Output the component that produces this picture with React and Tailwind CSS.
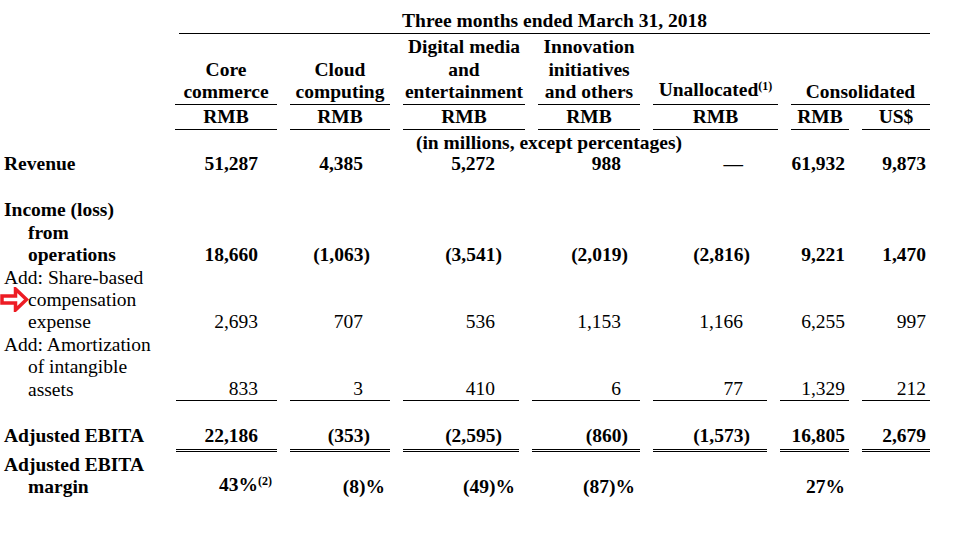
import React from "react";

const HEAD = "grid grid-cols-[162px_102px_100px_122px_102px_125px_58px_68px] gap-x-[13px]";
const BODY = "grid grid-cols-[163px_101px_100px_116px_108px_114px_69px_68px] gap-x-[13px]";
const PAD = ["pr-[19px]", "pr-[27px]", "pr-[24px]", "pr-[19px]", "pr-[24px]", "pr-[4px]", "pr-[4px]"];

// closing paren hangs past the digit column
function Num({ v }) {
  if (typeof v !== "string") return v;
  if (v.startsWith("(") && v.endsWith(")")) {
    return (
      <>
        {v.slice(0, -1)}
        <span className="-mr-[7px]">)</span>
      </>
    );
  }
  return v;
}

function Sup({ children, className = "" }) {
  return <span className={`relative -top-[6px] text-[12px] ${className}`}>{children}</span>;
}

function Arrow() {
  return (
    <svg width="30" height="25" viewBox="0 0 30 25" className="absolute left-[-28px] top-[-2px]">
      <path
        d="M2 9H15.5V2L26.5 12.5L15.5 23V16H2Z"
        fill="#fff"
        stroke="#ed1c24"
        strokeWidth="3.5"
      />
    </svg>
  );
}

function Row({ label, values, bold, line, className = "" }) {
  const border =
    line === 1
      ? "border-b border-black"
      : line === 2
      ? "border-b-[3px] border-double border-black pb-[1px]"
      : "";
  return (
    <div className={`${BODY} ${bold ? "font-bold" : "font-normal"} ${className}`}>
      <div className="pl-[4px] whitespace-nowrap">
        {label.map((l, i) => (
          <div key={i} className={i ? "pl-[24px]" : ""}>
            {l}
          </div>
        ))}
      </div>
      {values.map((v, i) => (
        <div key={i} className={`flex flex-col justify-end text-right whitespace-nowrap ${PAD[i]} ${border}`}>
          <div>
            <Num v={v} />
          </div>
        </div>
      ))}
    </div>
  );
}

const heads = [
  ["Core", "commerce"],
  ["Cloud", "computing"],
  ["Digital media", "and", "entertainment"],
  ["Innovation", "initiatives", "and others"],
];

export default function App() {
  return (
    <div className="w-[960px] h-[540px] overflow-hidden bg-white text-black pt-[10px] font-['Liberation_Serif','Times_New_Roman',serif] text-[19.5px] leading-[22.4px]">
      {/* title */}
      <div className={HEAD}>
        <div />
        <div className="col-span-7 ml-[4px] border-b border-black pb-[1px] text-center font-bold">
          Three months ended March 31, 2018
        </div>
      </div>

      {/* column heads */}
      <div className={`${HEAD} pt-[2px] text-center font-bold`}>
        <div />
        {heads.map((h, i) => (
          <div key={i} className="flex flex-col justify-end border-b border-black whitespace-nowrap">
            {h.map((l) => (
              <div key={l}>{l}</div>
            ))}
          </div>
        ))}
        <div className="flex flex-col justify-end border-b border-black whitespace-nowrap">
          <div>
            Unallocated<Sup>(1)</Sup>
          </div>
        </div>
        <div className="col-span-2 flex flex-col justify-end border-b border-black">
          <div>Consolidated</div>
        </div>
      </div>

      {/* currency */}
      <div className={`${HEAD} pt-[1px] text-center font-bold`}>
        <div />
        {["RMB", "RMB", "RMB", "RMB", "RMB", "RMB", "US$"].map((c, i) => (
          <div key={i} className="border-b border-black pb-[1px]">
            {c}
          </div>
        ))}
      </div>

      <div className={`${HEAD} pt-[2px] font-bold leading-[21px]`}>
        <div />
        <div className="col-span-7 pr-[7px] text-center">(in millions, except percentages)</div>
      </div>

      <Row label={["Revenue"]} bold values={["51,287", "4,385", "5,272", "988", "\u2014", "61,932", "9,873"]} />

      <Row
        className="mt-[24px]"
        label={["Income (loss)", "from", "operations"]}
        bold
        values={["18,660", "(1,063)", "(3,541)", "(2,019)", "(2,816)", "9,221", "1,470"]}
      />

      <Row
        label={[
          "Add: Share-based",
          <span className="relative">
            <Arrow />
            compensation
          </span>,
          "expense",
        ]}
        values={["2,693", "707", "536", "1,153", "1,166", "6,255", "997"]}
      />

      <Row
        label={["Add: Amortization", "of intangible", "assets"]}
        line={1}
        values={["833", "3", "410", "6", "77", "1,329", "212"]}
      />

      <Row
        className="mt-[24px]"
        label={["Adjusted EBITA"]}
        bold
        line={2}
        values={["22,186", "(353)", "(2,595)", "(860)", "(1,573)", "16,805", "2,679"]}
      />

      <Row
        className="pt-[2px]"
        label={["Adjusted EBITA", "margin"]}
        bold
        values={[
          <>
            43%<Sup className="-mr-[14px]">(2)</Sup>
          </>,
          <>
            (8<span className="-mr-[22px]">)%</span>
          </>,
          <>
            (49<span className="-mr-[20px]">)%</span>
          </>,
          <>
            (87<span className="-mr-[14px]">)%</span>
          </>,
          "",
          "27%",
          "",
        ]}
      />
    </div>
  );
}
